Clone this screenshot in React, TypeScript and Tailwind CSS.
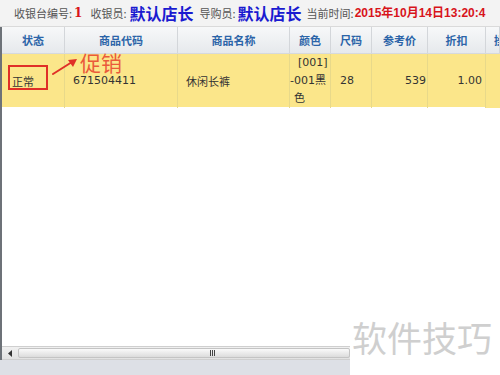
import React from "react";

const cjk = "font-['Noto_Sans_CJK_SC',sans-serif]";
const num = "font-['DejaVu_Sans','Noto_Sans_CJK_SC',sans-serif]";

const headers = ["状态", "商品代码", "商品名称", "颜色", "尺码", "参考价", "折扣", "操"];
const cols = "grid grid-cols-[63px_113px_112px_41px_41px_56px_58px_1fr]";

export default function App() {
  return (
    <div className={`relative w-[500px] h-[375px] overflow-hidden bg-white flex flex-col ${cjk}`}>
      {/* top info bar */}
      <div className="h-[27px] shrink-0 bg-[#f3f3f3] flex items-center pl-[14px] whitespace-nowrap text-[11px] text-[#555] border-b border-[#dadada]">
        <span>收银台编号:</span>
        <span className="text-[#d8141b] font-bold font-['DejaVu_Serif',serif] text-[12px] ml-[2px]">1</span>
        <span className="ml-[8px]">收银员:</span>
        <span className="text-[#1a1ad0] font-bold text-[16px] ml-[3px] leading-none">默认店长</span>
        <span className="ml-[6px]">导购员:</span>
        <span className="text-[#1a1ad0] font-bold text-[16px] ml-[2px] leading-none">默认店长</span>
        <span className="ml-[5px]">当前时间:</span>
        <span className="text-[#d8141b] font-bold text-[12px] ml-[1px] font-['Liberation_Sans','Noto_Sans_CJK_SC',sans-serif]">2015年10月14日13:20:4</span>
      </div>

      {/* grid */}
      <div className="flex-1 flex flex-col border-l-2 border-[#6d7278]">
        <div className={`${cols} h-[27px] shrink-0 bg-gradient-to-b from-[#f7f8f9] to-[#e6e9ec] border-b border-[#d6d9dc]`}>
          {headers.map((h, i) => (
            <div
              key={h}
              className={`flex items-center border-r border-[#d3d6da] text-[11px] font-bold text-[#2b64a8] overflow-hidden whitespace-nowrap ${i === 7 ? "pl-[8px]" : "justify-center"}`}
            >
              {h}
            </div>
          ))}
        </div>

        <div className={`${cols} h-[53px] shrink-0 bg-[#fbe68a] text-[11px] text-[#333]`}>
          <div className="flex items-center pl-[10px] border-r border-[#e8d98a]">正常</div>
          <div className={`flex items-center pl-[8px] border-r border-[#e8d98a] ${num}`}>671504411</div>
          <div className="flex items-center pl-[8px] border-r border-[#e8d98a]">休闲长裤</div>
          <div className={`flex flex-col leading-[18px] border-r border-[#e8d98a] ${num}`}>
            <span className="pl-[8px]">[001]</span>
            <span className="pl-0">-001黑</span>
            <span className="pl-[4px]">色</span>
          </div>
          <div className={`flex items-center pl-[9px] border-r border-[#e8d98a] ${num}`}>28</div>
          <div className={`flex items-center justify-end pr-[1px] border-r border-[#e8d98a] ${num}`}>539</div>
          <div className={`flex items-center justify-end pr-[3px] border-r border-[#e8d98a] ${num}`}>1.00</div>
          <div className="bg-[#fbe68a]" />
        </div>

        <div className="flex-1" />

        {/* horizontal scrollbar */}
        <div className="h-[14px] shrink-0 w-[348px] flex items-stretch bg-gradient-to-b from-[#f0f0f0] to-[#e2e2e2] border-y border-[#cfcfcf]">
          <div className="w-[16px] flex items-center justify-center">
            <svg width="4" height="7" viewBox="0 0 4 7">
              <path d="M4 0 L0 3.5 L4 7 Z" fill="#333" />
            </svg>
          </div>
          <div className="flex-1 my-[1px] rounded-[2px] bg-gradient-to-b from-[#fafafa] to-[#dcdcdc] border border-[#c4c4c4] flex items-center">
            <div className="ml-[191px] flex gap-[1px]">
              <span className="w-[1px] h-[6px] bg-[#444]" />
              <span className="w-[1px] h-[6px] bg-[#444]" />
              <span className="w-[1px] h-[6px] bg-[#444]" />
            </div>
          </div>
        </div>
      </div>

      <div className="h-[15px] shrink-0 w-[350px] bg-[#dde0e6]" />

      {/* annotation overlay */}
      <div className="absolute left-[8px] top-[65px] w-[40px] h-[25px] border-2 border-[#e02f27]" />
      <svg className="absolute left-[50px] top-[54px]" width="30" height="24" viewBox="0 0 30 24">
        <path d="M3 20 L22 8" stroke="#e02f27" strokeWidth="2" strokeLinecap="round" />
        <path d="M27 5 L18 6 L23 13 Z" fill="#e02f27" />
      </svg>
      <div className="absolute left-[80px] top-[49px] text-[21px] leading-[26px] text-[#ea5a3a]">促销</div>

      {/* watermark */}
      <div className="absolute left-[350px] top-[305px] w-[150px] h-[70px] bg-white flex items-start pt-[12px] pl-[2px] text-[35px] leading-[40px] text-[#cfcfcf] whitespace-nowrap">
        软件技巧
      </div>
    </div>
  );
}
